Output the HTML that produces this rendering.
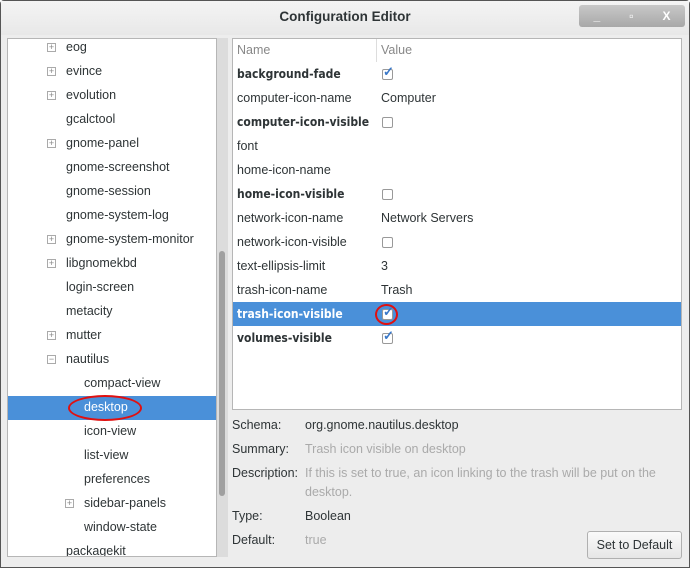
<html><head><style>
*{margin:0;padding:0;box-sizing:border-box}
body{width:690px;height:568px;background:#fff;font-family:"Liberation Sans",sans-serif;font-size:12.5px;color:#2e3436;position:relative;overflow:hidden}
.win{position:absolute;left:0;top:0;width:690px;height:568px;background:#ededed;border:1px solid #555;border-radius:4px 4px 0 0}
.title{position:absolute;left:0;top:0;width:688px;height:34px;text-align:center;line-height:32px;font-weight:bold;font-size:13.5px;color:#2e3436;background:linear-gradient(#f4f4f4,#e8e8e8)}
.btns{position:absolute;right:4px;top:4px;width:106px;height:22px;background:linear-gradient(#c8c8c8,#a8a8a8);border-radius:3px;color:#fff;font-size:12px;display:flex;justify-content:space-around;align-items:center;font-weight:bold}
.left{position:absolute;left:6px;top:37px;width:210px;height:519px;background:#fff;border:1px solid #b6b6b6;overflow:hidden}
.sb{position:absolute;left:216px;top:37px;width:11px;height:519px;background:#dcdcdc}
.thumb{position:absolute;left:218px;top:250px;width:6px;height:245px;background:#a0a0a0;border-radius:3px}
.t{position:absolute;height:24px;line-height:24px;white-space:nowrap}
.left .t{top:-1px}
.plus{position:absolute;width:9px;height:9px;border:1px solid #aaa;font-size:9px;line-height:7px;text-align:center;color:#888}
.right{position:absolute;left:231px;top:37px;width:450px;height:372px;background:#fff;border:1px solid #b6b6b6}
.hdr{position:absolute;left:0;top:0;width:448px;height:23px;color:#888;line-height:22px}
.b{font-family:"DejaVu Sans Condensed","DejaVu Sans",sans-serif;font-weight:bold;font-size:12px}
.cb{position:absolute;width:11px;height:11px;border:1px solid #999;border-radius:2px;background:#fff}
.ck{color:#3a78c8;font-size:13px;position:absolute;left:0;top:-6px;font-weight:bold}
.lab{position:absolute;left:231px;color:#2e3436}
.val{position:absolute;left:304px}
.g{color:#aaa}
</style></head><body><div class="win">
<div class="title">Configuration Editor</div>
<div class="btns"><span>_</span><span>▫</span><span>X</span></div>
<div class="left">
<div class="plus" style="left:39px;top:4px">+</div><div class="t" style="left:58px;margin-top:-3px">eog</div>
<div class="plus" style="left:39px;top:28px">+</div><div class="t" style="left:58px;margin-top:21px">evince</div>
<div class="plus" style="left:39px;top:52px">+</div><div class="t" style="left:58px;margin-top:45px">evolution</div>
<div class="t" style="left:58px;margin-top:69px">gcalctool</div>
<div class="plus" style="left:39px;top:100px">+</div><div class="t" style="left:58px;margin-top:93px">gnome-panel</div>
<div class="t" style="left:58px;margin-top:117px">gnome-screenshot</div>
<div class="t" style="left:58px;margin-top:141px">gnome-session</div>
<div class="t" style="left:58px;margin-top:165px">gnome-system-log</div>
<div class="plus" style="left:39px;top:196px">+</div><div class="t" style="left:58px;margin-top:189px">gnome-system-monitor</div>
<div class="plus" style="left:39px;top:220px">+</div><div class="t" style="left:58px;margin-top:213px">libgnomekbd</div>
<div class="t" style="left:58px;margin-top:237px">login-screen</div>
<div class="t" style="left:58px;margin-top:261px">metacity</div>
<div class="plus" style="left:39px;top:292px">+</div><div class="t" style="left:58px;margin-top:285px">mutter</div>
<div class="plus" style="left:39px;top:316px">−</div><div class="t" style="left:58px;margin-top:309px">nautilus</div>
<div class="t" style="left:76px;margin-top:333px">compact-view</div>
<div style="position:absolute;left:0;top:357px;width:210px;height:24px;background:#4a90d9"></div>
<div style="position:absolute;left:60px;top:356px;width:74px;height:26px;border:2px solid #e01010;border-radius:50%"></div>
<div class="t" style="left:76px;margin-top:357px;color:#fff">desktop</div>
<div class="t" style="left:76px;margin-top:381px">icon-view</div>
<div class="t" style="left:76px;margin-top:405px">list-view</div>
<div class="t" style="left:76px;margin-top:429px">preferences</div>
<div class="plus" style="left:57px;top:460px">+</div><div class="t" style="left:76px;margin-top:453px">sidebar-panels</div>
<div class="t" style="left:76px;margin-top:477px">window-state</div>
<div class="t" style="left:58px;margin-top:501px">packagekit</div>
</div>
<div class="sb"></div><div class="thumb"></div>
<div class="right">
<div class="hdr"><span style="position:absolute;left:4px">Name</span><span style="position:absolute;left:143px;top:0;height:23px;border-left:1px solid #ddd"></span><span style="position:absolute;left:148px">Value</span></div>
<div class="t b" style="left:4px;top:23px">background-fade</div><div class="cb" style="left:149px;top:30px"><span class="ck">✓</span></div>
<div class="t" style="left:4px;top:47px">computer-icon-name</div><div class="t" style="left:148px;top:47px">Computer</div>
<div class="t b" style="left:4px;top:71px">computer-icon-visible</div><div class="cb" style="left:149px;top:78px"></div>
<div class="t" style="left:4px;top:95px">font</div>
<div class="t" style="left:4px;top:119px">home-icon-name</div>
<div class="t b" style="left:4px;top:143px">home-icon-visible</div><div class="cb" style="left:149px;top:150px"></div>
<div class="t" style="left:4px;top:167px">network-icon-name</div><div class="t" style="left:148px;top:167px">Network Servers</div>
<div class="t" style="left:4px;top:191px">network-icon-visible</div><div class="cb" style="left:149px;top:198px"></div>
<div class="t" style="left:4px;top:215px">text-ellipsis-limit</div><div class="t" style="left:148px;top:215px">3</div>
<div class="t" style="left:4px;top:239px">trash-icon-name</div><div class="t" style="left:148px;top:239px">Trash</div>
<div style="position:absolute;left:0;top:263px;width:448px;height:24px;background:#4a90d9"></div>
<div class="t b" style="left:4px;top:263px;color:#fff">trash-icon-visible</div><div class="cb" style="left:149px;top:270px"><span class="ck">✓</span></div>
<div style="position:absolute;left:142px;top:265px;width:23px;height:21px;border:2px solid #e01010;border-radius:50%"></div>
<div class="t b" style="left:4px;top:287px">volumes-visible</div><div class="cb" style="left:149px;top:294px"><span class="ck">✓</span></div>
</div>
<div class="t lab" style="top:412px">Schema:</div><div class="t val" style="top:412px">org.gnome.nautilus.desktop</div>
<div class="t lab" style="top:436px">Summary:</div><div class="t val g" style="top:436px">Trash icon visible on desktop</div>
<div class="t lab" style="top:460px">Description:</div><div class="t val g" style="top:460px">If this is set to true, an icon linking to the trash will be put on the</div><div class="t val g" style="top:479px">desktop.</div>
<div class="t lab" style="top:503px">Type:</div><div class="t val" style="top:503px">Boolean</div>
<div class="t lab" style="top:527px">Default:</div><div class="t val g" style="top:527px">true</div>
<div style="position:absolute;left:586px;top:530px;width:95px;height:28px;border:1px solid #b0b0b0;border-radius:3px;background:linear-gradient(#fafafa,#e6e6e6);text-align:center;line-height:26px">Set to Default</div>
</div></body></html>
